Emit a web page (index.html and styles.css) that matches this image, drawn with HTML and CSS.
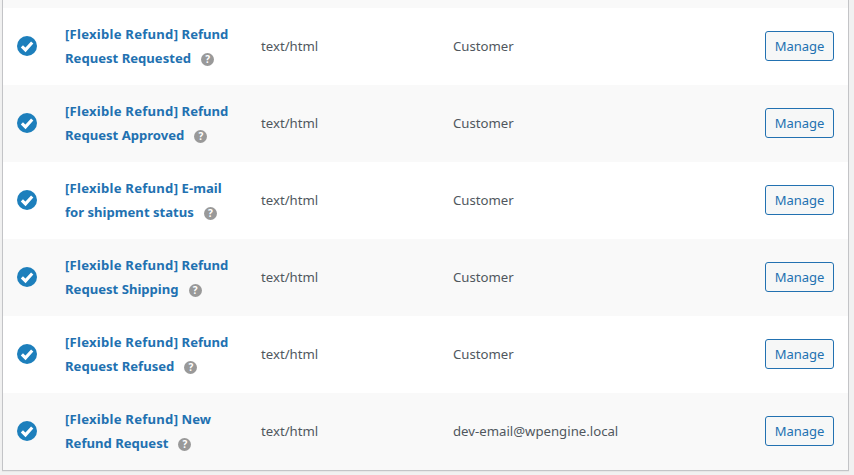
FILE: index.html
```html
<!DOCTYPE html>
<html lang="en">
<head>
<meta charset="utf-8">
<title>Emails</title>
<link rel="stylesheet" href="styles.css">
</head>
<body>
<svg class="defs" width="0" height="0" aria-hidden="true">
  <symbol id="ok" viewBox="0 0 20 20"><circle cx="10" cy="10" r="10" fill="#1d7fbc"/><path d="M4.9 10.3 8.5 13.9 15.2 6.5" fill="none" stroke="#fff" stroke-width="3.1"/></symbol>
</svg>
<main class="table">
  <div class="row">
    <svg class="status"><use href="#ok"/></svg>
    <div class="name"><a href="#"><span class="tag">[Flexible Refund]</span> Refund Request Requested</a><span class="help">?</span></div>
    <div class="type">text/html</div>
    <div class="to">Customer</div>
    <a class="btn" href="#">Manage</a>
  </div>
  <div class="row">
    <svg class="status"><use href="#ok"/></svg>
    <div class="name"><a href="#"><span class="tag">[Flexible Refund]</span> Refund Request Approved</a><span class="help">?</span></div>
    <div class="type">text/html</div>
    <div class="to">Customer</div>
    <a class="btn" href="#">Manage</a>
  </div>
  <div class="row">
    <svg class="status"><use href="#ok"/></svg>
    <div class="name"><a href="#"><span class="tag">[Flexible Refund]</span> E-mail for shipment status</a><span class="help">?</span></div>
    <div class="type">text/html</div>
    <div class="to">Customer</div>
    <a class="btn" href="#">Manage</a>
  </div>
  <div class="row">
    <svg class="status"><use href="#ok"/></svg>
    <div class="name"><a href="#"><span class="tag">[Flexible Refund]</span> Refund Request Shipping</a><span class="help">?</span></div>
    <div class="type">text/html</div>
    <div class="to">Customer</div>
    <a class="btn" href="#">Manage</a>
  </div>
  <div class="row">
    <svg class="status"><use href="#ok"/></svg>
    <div class="name"><a href="#"><span class="tag">[Flexible Refund]</span> Refund Request Refused</a><span class="help">?</span></div>
    <div class="type">text/html</div>
    <div class="to">Customer</div>
    <a class="btn" href="#">Manage</a>
  </div>
  <div class="row">
    <svg class="status"><use href="#ok"/></svg>
    <div class="name"><a href="#"><span class="tag">[Flexible Refund]</span> New Refund Request</a><span class="help">?</span></div>
    <div class="type">text/html</div>
    <div class="to">dev-email@wpengine.local</div>
    <a class="btn" href="#">Manage</a>
  </div>
</main>
</body>
</html>
```
FILE: styles.css
```css
html, body {
  margin: 0;
  height: 475px;
  overflow: hidden;
  background: #f1f1f1;
}
body {
  padding: 0 5px 0 2px;
  font-family: "Noto Sans", "Open Sans", sans-serif;
  font-size: 13.2px;
  color: #50575e;
}
.defs { display: block; }
.table {
  border: 1px solid #c3c4c7;
  border-top: 0;
  padding-top: 8px;
  background: #f9f9f9;
  box-shadow: 0 1px 1px rgba(0, 0, 0, .04);
}
.row {
  box-sizing: border-box;
  display: grid;
  grid-template-columns: 62px 196px 192px 1fr auto;
  align-items: center;
  height: 77px;
  padding: 0 14px 2px 0;
  background: #f9f9f9;
}
.row:nth-child(odd) { background: #fff; }
.status {
  width: 20px;
  height: 20px;
  margin-left: 14px;
}
.name {
  width: 168px;
  font-size: 13.1px;
  line-height: 24px;
  font-weight: 700;
}
.name a {
  color: #2271b1;
  text-decoration: none;
}
.tag { letter-spacing: .25px; }
.help {
  display: inline-block;
  width: 13px;
  height: 13px;
  margin-left: 10px;
  border-radius: 50%;
  background: #999;
  color: #fff;
  font-size: 10px;
  line-height: 13px;
  text-align: center;
  vertical-align: 0;
}
.btn {
  box-sizing: border-box;
  width: 69px;
  height: 30px;
  border: 1px solid #2271b1;
  border-radius: 3px;
  background: #f6f7f7;
  color: #2271b1;
  font-size: 13px;
  line-height: 28px;
  text-align: center;
  text-decoration: none;
}
```
